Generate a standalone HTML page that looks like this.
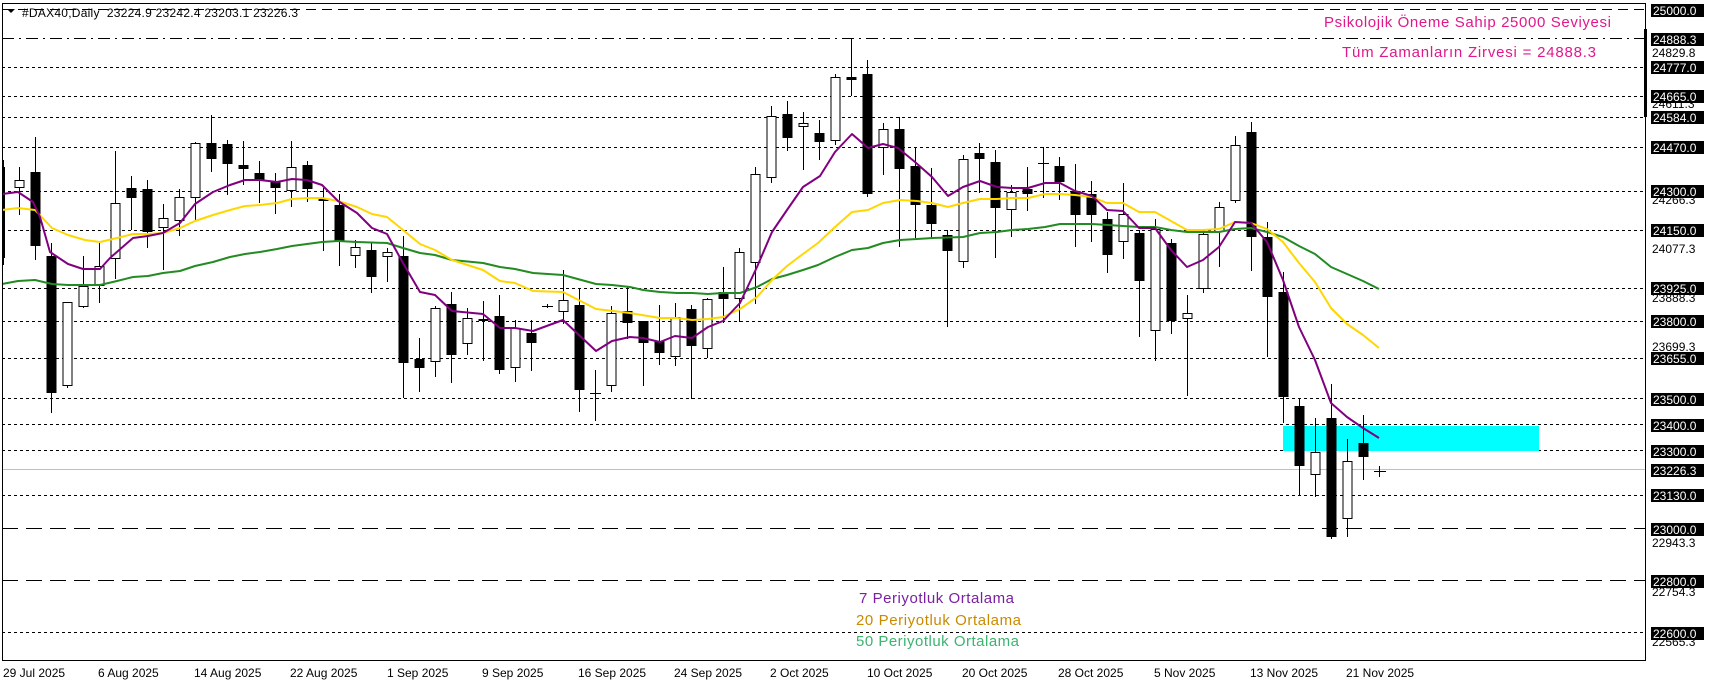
<!DOCTYPE html>
<html><head><meta charset="utf-8"><style>
html,body{margin:0;padding:0;background:#fff;}
svg{display:block;font-family:"Liberation Sans",Tahoma,sans-serif;}
</style></head><body>
<svg width="1709" height="684" viewBox="0 0 1709 684" xmlns="http://www.w3.org/2000/svg">
<rect width="1709" height="684" fill="#fff"/>
<g shape-rendering="crispEdges" stroke="#000" stroke-width="1" fill="none">
<line x1="2" y1="9.5" x2="1645" y2="9.5" stroke-dasharray="10,6"/>
<line x1="2" y1="38.5" x2="1645" y2="38.5" stroke-dasharray="12,5,2,5"/>
<line x1="2" y1="67.5" x2="1645" y2="67.5" stroke-dasharray="3,3"/>
<line x1="2" y1="96.5" x2="1645" y2="96.5" stroke-dasharray="3,3"/>
<line x1="2" y1="117.5" x2="1645" y2="117.5" stroke-dasharray="3,3"/>
<line x1="2" y1="147.5" x2="1645" y2="147.5" stroke-dasharray="3,3"/>
<line x1="2" y1="191.5" x2="1645" y2="191.5" stroke-dasharray="3,3"/>
<line x1="2" y1="230.5" x2="1645" y2="230.5" stroke-dasharray="3,3"/>
<line x1="2" y1="288.5" x2="1645" y2="288.5" stroke-dasharray="3,3"/>
<line x1="2" y1="321.5" x2="1645" y2="321.5" stroke-dasharray="3,3"/>
<line x1="2" y1="358.5" x2="1645" y2="358.5" stroke-dasharray="3,3"/>
<line x1="2" y1="398.5" x2="1645" y2="398.5" stroke-dasharray="3,3"/>
<line x1="2" y1="424.5" x2="1645" y2="424.5" stroke-dasharray="3,3"/>
<line x1="2" y1="450.5" x2="1645" y2="450.5" stroke-dasharray="3,3"/>
<line x1="2" y1="469.5" x2="1645" y2="469.5" stroke="#c0c0c0"/>
<line x1="2" y1="495.5" x2="1645" y2="495.5" stroke-dasharray="3,3"/>
<line x1="2" y1="528.5" x2="1645" y2="528.5" stroke-dasharray="16,8"/>
<line x1="2" y1="580.5" x2="1645" y2="580.5" stroke-dasharray="16,8"/>
<line x1="2" y1="632.5" x2="1645" y2="632.5" stroke-dasharray="3,3"/>
</g>
<rect x="1283" y="426" width="256" height="25" fill="#00ffff"/>
<g shape-rendering="crispEdges">
<path stroke="#000" stroke-width="1" fill="none" d="M3.5 160V265M19.5 167V215M35.5 137V260M51.5 243V413M67.5 302V388M83.5 256V308M99.5 243V303M115.5 151V279M131.5 176V230M147.5 180V248M163.5 204V270M179.5 189V236M195.5 142V220M211.5 115V172M227.5 140V195M243.5 141V185M259.5 161V203M275.5 173V214M291.5 141V207M307.5 161V202M323.5 188V251M339.5 194V266M355.5 240V268M371.5 243V293M387.5 248V282M403.5 236V398M419.5 338V392M435.5 306V377M451.5 292V383M467.5 308V355M483.5 301V361M499.5 295V374M515.5 320V382M531.5 320V371M547.5 304V308M563.5 270V324M579.5 288V412M595.5 370V421M611.5 306V392M627.5 287V339M643.5 321V386M659.5 305V365M675.5 303V366M691.5 305V399M707.5 298V358M723.5 267V323M739.5 248V322M755.5 167V304M771.5 106V183M787.5 101V151M803.5 112V170M819.5 120V160M835.5 74V145M851.5 38V96M867.5 60V197M883.5 123V175M899.5 117V247M915.5 147V238M931.5 168V238M947.5 230V327M963.5 155V268M979.5 143V193M995.5 150V258M1011.5 185V237M1027.5 167V211M1043.5 147V198M1059.5 157V200M1075.5 164V247M1091.5 181V242M1107.5 212V273M1123.5 183V259M1139.5 230V337M1155.5 219V361M1171.5 239V334M1187.5 295V396M1203.5 230V293M1219.5 202V267M1235.5 136V203M1251.5 122V271M1267.5 222V357M1283.5 272V423M1299.5 399V496M1315.5 418V497M1331.5 384V539M1347.5 439V537M1363.5 415V480M1379.5 466V477M542 306.5H553M590 393.5H601M1038 163.5H1049M1374 471.5H1386"/>
<g fill="#000">
<rect x="2" y="167" width="3" height="91"/>
<rect x="30.5" y="172" width="10" height="74"/>
<rect x="46.5" y="256" width="10" height="137"/>
<rect x="126.5" y="188" width="10" height="10"/>
<rect x="142.5" y="189" width="10" height="43"/>
<rect x="206.5" y="143" width="10" height="16"/>
<rect x="222.5" y="144" width="10" height="20"/>
<rect x="238.5" y="165" width="10" height="4"/>
<rect x="254.5" y="173" width="10" height="8"/>
<rect x="270.5" y="181" width="10" height="7"/>
<rect x="302.5" y="165" width="10" height="24"/>
<rect x="318.5" y="199" width="10" height="2"/>
<rect x="334.5" y="205" width="10" height="36"/>
<rect x="366.5" y="250" width="10" height="27"/>
<rect x="398.5" y="256" width="10" height="107"/>
<rect x="414.5" y="359" width="10" height="9"/>
<rect x="446.5" y="304" width="10" height="51"/>
<rect x="478.5" y="319" width="10" height="2"/>
<rect x="494.5" y="316" width="10" height="54"/>
<rect x="526.5" y="333" width="10" height="10"/>
<rect x="574.5" y="305" width="10" height="85"/>
<rect x="622.5" y="311" width="10" height="12"/>
<rect x="638.5" y="321" width="10" height="22"/>
<rect x="654.5" y="341" width="10" height="12"/>
<rect x="686.5" y="309" width="10" height="37"/>
<rect x="718.5" y="292" width="10" height="7"/>
<rect x="782.5" y="114" width="10" height="24"/>
<rect x="814.5" y="133" width="10" height="9"/>
<rect x="846.5" y="77" width="10" height="3"/>
<rect x="862.5" y="74" width="10" height="120"/>
<rect x="894.5" y="129" width="10" height="40"/>
<rect x="910.5" y="166" width="10" height="39"/>
<rect x="926.5" y="205" width="10" height="19"/>
<rect x="942.5" y="235" width="10" height="16"/>
<rect x="974.5" y="153" width="10" height="6"/>
<rect x="990.5" y="162" width="10" height="46"/>
<rect x="1022.5" y="189" width="10" height="5"/>
<rect x="1054.5" y="166" width="10" height="16"/>
<rect x="1070.5" y="191" width="10" height="24"/>
<rect x="1086.5" y="194" width="10" height="21"/>
<rect x="1102.5" y="219" width="10" height="36"/>
<rect x="1134.5" y="233" width="10" height="48"/>
<rect x="1166.5" y="243" width="10" height="78"/>
<rect x="1246.5" y="132" width="10" height="105"/>
<rect x="1262.5" y="237" width="10" height="60"/>
<rect x="1278.5" y="292" width="10" height="105"/>
<rect x="1294.5" y="406" width="10" height="60"/>
<rect x="1326.5" y="418" width="10" height="119"/>
<rect x="1358.5" y="443" width="10" height="14"/>
</g>
<g fill="#fff" stroke="#000" stroke-width="1">
<rect x="15" y="180.5" width="9" height="7"/>
<rect x="63" y="302.5" width="9" height="83"/>
<rect x="79" y="286.5" width="9" height="20"/>
<rect x="95" y="266.5" width="9" height="19"/>
<rect x="111" y="203.5" width="9" height="55"/>
<rect x="159" y="218.5" width="9" height="9"/>
<rect x="175" y="197.5" width="9" height="23"/>
<rect x="191" y="143.5" width="9" height="54"/>
<rect x="287" y="167.5" width="9" height="23"/>
<rect x="351" y="247.5" width="9" height="8"/>
<rect x="383" y="252.5" width="9" height="4"/>
<rect x="431" y="308.5" width="9" height="53"/>
<rect x="463" y="318.5" width="9" height="25"/>
<rect x="511" y="328.5" width="9" height="39"/>
<rect x="559" y="300.5" width="9" height="11"/>
<rect x="607" y="313.5" width="9" height="72"/>
<rect x="671" y="317.5" width="9" height="39"/>
<rect x="703" y="299.5" width="9" height="49"/>
<rect x="735" y="252.5" width="9" height="46"/>
<rect x="751" y="174.5" width="9" height="88"/>
<rect x="767" y="116.5" width="9" height="61"/>
<rect x="799" y="123.5" width="9" height="3"/>
<rect x="831" y="77.5" width="9" height="63"/>
<rect x="879" y="129.5" width="9" height="18"/>
<rect x="959" y="159.5" width="9" height="102"/>
<rect x="1007" y="192.5" width="9" height="17"/>
<rect x="1119" y="214.5" width="9" height="27"/>
<rect x="1151" y="229.5" width="9" height="101"/>
<rect x="1183" y="313.5" width="9" height="5"/>
<rect x="1199" y="234.5" width="9" height="54"/>
<rect x="1215" y="207.5" width="9" height="24"/>
<rect x="1231" y="145.5" width="9" height="55"/>
<rect x="1311" y="452.5" width="9" height="22"/>
<rect x="1343" y="461.5" width="9" height="57"/>
</g>
</g>
<g fill="none" stroke-width="2" stroke-linejoin="round">
<polyline stroke="#228b22" points="2,284 18,281 35,280 52,284 68,285 100,285 117,281 133,277 148,276 163,273 180,271 195,266 213,262 230,257 245,254 260,252 277,249 292,246 307,244 322,242 338,241 357,242 387,243 403,248 420,253 435,255 452,260 483,263 500,267 515,269 533,273 563,275 596,284 612,285 630,287 643,290 660,292 677,293 692,293 708,294 723,293 740,293 757,287 772,279 787,275 803,270 818,265 835,257 852,250 868,248 883,243 900,240 917,239 933,238 963,237 980,233 997,232 1012,230 1028,229 1045,227 1060,224 1077,224 1092,224 1108,225 1123,226 1139,227 1155,227 1171,230 1187,232 1219,232 1235,229 1251,228 1267,232 1283,237 1299,246 1315,254 1331,267 1347,274 1363,281 1379,289"/>
<polyline stroke="#ffd700" points="2,210 18,208 35,210 52,228 68,235 85,240 100,242 117,238 133,234 148,234 163,233 180,228 195,221 213,215 230,210 245,206 260,205 277,203 292,199 307,198 322,198 338,201 357,207 372,214 387,217 403,230 420,244 435,250 452,260 483,270 500,281 515,283 533,291 563,292 596,309 630,313 660,318 677,318 692,320 708,319 723,317 740,309 757,297 772,280 787,266 803,254 818,243 835,227 852,212 868,210 883,203 900,200 917,201 932,203 948,207 963,203 980,199 997,199 1012,198 1028,198 1045,194 1060,194 1075,195 1092,197 1107,203 1123,203 1139,212 1155,212 1171,221 1187,230 1203,230 1219,229 1235,222 1251,223 1267,229 1283,242 1299,263 1315,282 1331,308 1347,324 1363,335 1379,348"/>
<polyline stroke="#800080" points="2,194 18,192 33,202 40,217 50,252 68,264 83,269 100,269 110,258 133,238 148,236 163,233 180,223 195,204 213,192 230,185 245,180 260,180 277,182 292,179 307,180 322,185 338,201 357,213 372,228 387,234 403,263 420,292 435,295 452,311 483,314 500,328 515,328 533,331 563,320 596,351 612,341 630,337 643,338 660,342 675,336 692,338 708,327 723,321 740,303 757,267 772,232 787,210 803,187 820,176 835,152 852,134 868,148 883,144 898,148 915,162 932,177 948,196 963,187 980,181 997,187 1012,188 1028,188 1045,183 1060,183 1075,191 1092,196 1107,210 1123,211 1139,228 1155,228 1171,250 1187,267 1203,260 1219,247 1235,222 1251,223 1267,242 1283,280 1299,327 1315,360 1331,403 1347,417 1363,428 1379,438"/>
</g>
<g shape-rendering="crispEdges" fill="#000">
<rect x="2" y="3" width="1644" height="1"/>
<rect x="2" y="3" width="1" height="658"/>
<rect x="2" y="660" width="1644" height="1"/>
<rect x="1645" y="3" width="1" height="658"/>
<rect x="1644" y="29" width="3" height="88"/>
</g>
<g font-size="12" fill="#000">
<text x="1652" y="57">24829.8</text>
<text x="1652" y="108">24611.3</text>
<text x="1652" y="204">24266.3</text>
<text x="1652" y="253">24077.3</text>
<text x="1652" y="302">23888.3</text>
<text x="1652" y="351">23699.3</text>
<text x="1652" y="547">22943.3</text>
<text x="1652" y="596">22754.3</text>
<text x="1652" y="646">22565.3</text>
</g>
<g shape-rendering="crispEdges" fill="#000">
<rect x="1651" y="4" width="53" height="13"/>
<rect x="1651" y="33" width="53" height="13"/>
<rect x="1651" y="61" width="53" height="13"/>
<rect x="1651" y="90" width="53" height="13"/>
<rect x="1651" y="111" width="53" height="13"/>
<rect x="1651" y="141" width="53" height="13"/>
<rect x="1651" y="185" width="53" height="13"/>
<rect x="1651" y="224" width="53" height="13"/>
<rect x="1651" y="282" width="53" height="13"/>
<rect x="1651" y="315" width="53" height="13"/>
<rect x="1651" y="352" width="53" height="13"/>
<rect x="1651" y="393" width="53" height="13"/>
<rect x="1651" y="419" width="53" height="13"/>
<rect x="1651" y="445" width="53" height="13"/>
<rect x="1651" y="464" width="53" height="13"/>
<rect x="1651" y="489" width="53" height="13"/>
<rect x="1651" y="523" width="53" height="13"/>
<rect x="1651" y="575" width="53" height="13"/>
<rect x="1651" y="627" width="53" height="13"/>
</g>
<g font-size="12" fill="#fff">
<text x="1653" y="15">25000.0</text>
<text x="1653" y="44">24888.3</text>
<text x="1653" y="72">24777.0</text>
<text x="1653" y="101">24665.0</text>
<text x="1653" y="122">24584.0</text>
<text x="1653" y="152">24470.0</text>
<text x="1653" y="196">24300.0</text>
<text x="1653" y="235">24150.0</text>
<text x="1653" y="293">23925.0</text>
<text x="1653" y="326">23800.0</text>
<text x="1653" y="363">23655.0</text>
<text x="1653" y="404">23500.0</text>
<text x="1653" y="430">23400.0</text>
<text x="1653" y="456">23300.0</text>
<text x="1653" y="475">23226.3</text>
<text x="1653" y="500">23130.0</text>
<text x="1653" y="534">23000.0</text>
<text x="1653" y="586">22800.0</text>
<text x="1653" y="638">22600.0</text>
</g>
<path d="M7 9H15L11 13Z" fill="#000"/>
<text x="22" y="17" font-size="12" fill="#000" xml:space="preserve" textLength="276">#DAX40,Daily  23224.9 23242.4 23203.1 23226.3</text>
<text x="1611" y="27" font-size="15" fill="#e0188c" text-anchor="end" textLength="287">Psikolojik Öneme Sahip 25000 Seviyesi</text>
<text x="1596" y="57" font-size="15" fill="#e0188c" text-anchor="end" textLength="254">Tüm Zamanların Zirvesi = 24888.3</text>
<text x="859" y="603" font-size="15" fill="#7b1fa2" textLength="155">7 Periyotluk Ortalama</text>
<text x="856" y="625" font-size="15" fill="#c98a00" textLength="165">20 Periyotluk Ortalama</text>
<text x="856" y="646" font-size="15" fill="#3cb371" textLength="163">50 Periyotluk Ortalama</text>
<g font-size="12" fill="#000">
<text x="3" y="677">29 Jul 2025</text>
<text x="98" y="677">6 Aug 2025</text>
<text x="194" y="677">14 Aug 2025</text>
<text x="290" y="677">22 Aug 2025</text>
<text x="387" y="677">1 Sep 2025</text>
<text x="482" y="677">9 Sep 2025</text>
<text x="578" y="677">16 Sep 2025</text>
<text x="674" y="677">24 Sep 2025</text>
<text x="770" y="677">2 Oct 2025</text>
<text x="867" y="677">10 Oct 2025</text>
<text x="962" y="677">20 Oct 2025</text>
<text x="1058" y="677">28 Oct 2025</text>
<text x="1154" y="677">5 Nov 2025</text>
<text x="1250" y="677">13 Nov 2025</text>
<text x="1346" y="677">21 Nov 2025</text>
</g>
</svg>
</body></html>
